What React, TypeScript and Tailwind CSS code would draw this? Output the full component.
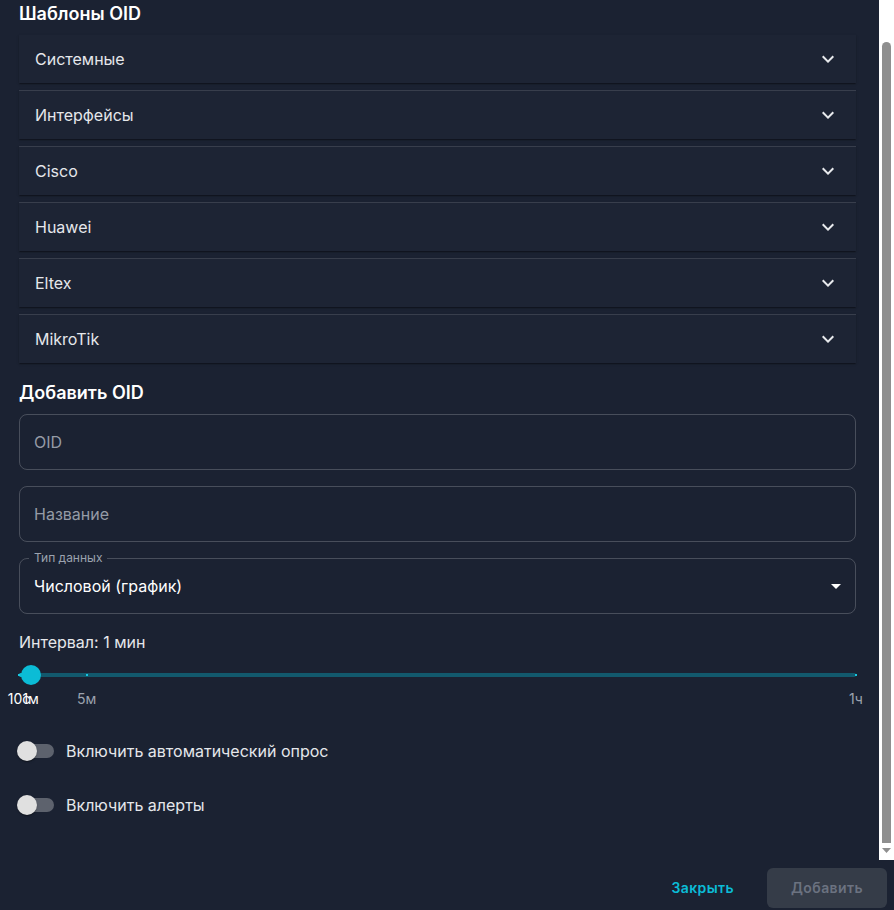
import { useLayoutEffect, useRef } from 'react'

const groups = ['Системные', 'Интерфейсы', 'Cisco', 'Huawei', 'Eltex', 'MikroTik']

// slider scale in seconds
const MIN = 10
const MAX = 3600
const VALUE = 60
const marks = [
  { value: 10, label: '10с' },
  { value: 60, label: '1м' },
  { value: 300, label: '5м' },
  { value: 3600, label: '1ч' },
]

const pct = (v: number) => ((v - MIN) / (MAX - MIN)) * 100

function ExpandMore() {
  return (
    <svg width="24" height="24" viewBox="0 0 24 24" className="fill-[#e8eaed] flex-shrink-0">
      <path d="M16.59 8.59 12 13.17 7.41 8.59 6 10l6 6 6-6z" />
    </svg>
  )
}

function Switch({ label }: { label: string }) {
  return (
    <label className="flex items-center h-[38px]">
      <span className="relative w-[58px] h-[38px] ml-[-11px] flex items-center justify-center">
        <span className="w-[34px] h-[14px] rounded-full bg-[#5d626d]" />
        <span className="absolute left-[9px] top-[9px] w-5 h-5 rounded-full bg-[#e0e0e0] shadow-[0_2px_1px_-1px_rgba(0,0,0,0.2),0_1px_1px_0_rgba(0,0,0,0.14),0_1px_3px_0_rgba(0,0,0,0.12)]" />
      </span>
      <span className="text-base text-[#e5e7eb]">{label}</span>
    </label>
  )
}

export default function App() {
  const scrollRef = useRef<HTMLDivElement>(null)

  useLayoutEffect(() => {
    if (scrollRef.current) scrollRef.current.scrollTop = 29
  }, [])

  return (
    <div className="w-[894px] h-[910px] bg-[#1b2232] font-['Inter',sans-serif] flex flex-col overflow-hidden">
      <div className="h-[860px] flex flex-shrink-0">
        <div ref={scrollRef} className="flex-1 overflow-hidden">
          <div className="pt-[29px] pb-[36px] pl-[19px] pr-[23px]">
            <h2 className="text-lg leading-7 font-semibold text-white">Шаблоны OID</h2>

            <div className="mt-[7px] flex flex-col gap-[7px]">
              {groups.map((g, i) => (
                <div
                  key={g}
                  className={`bg-[#1d2434] shadow-[0_2px_1px_-1px_rgba(0,0,0,0.2),0_1px_1px_0_rgba(0,0,0,0.14),0_1px_3px_0_rgba(0,0,0,0.12)] ${i > 0 ? 'border-t border-white/12' : ''}`}
                >
                  <button className="w-full h-12 flex items-center justify-between pl-4 pr-4 text-left">
                    <span className="text-base text-[#e5e7eb]">{g}</span>
                    <ExpandMore />
                  </button>
                </div>
              ))}
            </div>

            <h2 className="mt-4 text-lg leading-7 font-semibold text-white">Добавить OID</h2>

            <div className="mt-[7px] flex flex-col gap-4">
              <input
                placeholder="OID"
                className="h-14 w-full px-[14px] rounded-lg border border-white/20 bg-transparent text-base text-[#e5e7eb] placeholder-[#959ba6] outline-none"
              />
              <input
                placeholder="Название"
                className="h-14 w-full px-[14px] rounded-lg border border-white/20 bg-transparent text-base text-[#e5e7eb] placeholder-[#959ba6] outline-none"
              />
              <div className="relative h-14 w-full rounded-lg border border-white/20 flex items-center justify-between pl-[14px] pr-[7px]">
                <span className="absolute -top-[9px] left-[9px] px-[5px] bg-[#1b2232] text-xs leading-4 text-[#9ca3af]">Тип данных</span>
                <span className="text-base text-white">Числовой (график)</span>
                <svg width="24" height="24" viewBox="0 0 24 24" className="fill-white">
                  <path d="M7 10l5 5 5-5z" />
                </svg>
              </div>
            </div>

            <p className="mt-4 text-base leading-6 text-[#e5e7eb]">Интервал: 1 мин</p>

            {/* slider */}
            <div className="relative mt-[11px] h-[20px]">
              <div className="absolute left-0 right-0 top-[8px] h-1 rounded-full bg-[#12596d]" />
              <div
                className="absolute left-0 top-[8px] h-1 rounded-full bg-[#0bbcd6]"
                style={{ width: `${pct(VALUE)}%` }}
              />
              {marks.map(m => (
                <span
                  key={m.value}
                  className="absolute top-[9px] w-[2px] h-[2px] -translate-x-1/2 bg-[#17c6df]"
                  style={{ left: `${pct(m.value)}%` }}
                />
              ))}
              <span
                className="absolute top-0 w-5 h-5 -translate-x-1/2 rounded-full bg-[#0bbcd6]"
                style={{ left: `${pct(VALUE)}%` }}
              />
            </div>
            <div className="relative h-5 mt-[4px]">
              {marks.map(m => (
                <span
                  key={m.value}
                  className={`absolute top-0 -translate-x-1/2 text-sm leading-5 whitespace-nowrap ${m.value <= VALUE ? 'text-white' : 'text-[#9ca3af]'}`}
                  style={{ left: `${pct(m.value)}%` }}
                >
                  {m.label}
                </span>
              ))}
            </div>

            <div className="mt-[23px] flex flex-col gap-4">
              <Switch label="Включить автоматический опрос" />
              <Switch label="Включить алерты" />
            </div>
          </div>
        </div>

        {/* scrollbar */}
        <div className="w-[15px] bg-white flex flex-col items-center pt-[42px] pb-[6px]">
          <div className="w-[9px] flex-1 rounded-t-full rounded-b-[4px] bg-[#8f8f8f]" />
          <svg width="9" height="6" viewBox="0 0 9 6" className="mt-[5px] fill-[#8f8f8f]">
            <path d="M0 0h9L4.5 5z" />
          </svg>
        </div>
      </div>

      <div className="h-[50px] flex items-start pt-2 justify-end pr-[7px]">
        <button className="h-10 px-4 text-sm font-semibold tracking-[0.4px] text-[#0bbcd6]">Закрыть</button>
        <button disabled className="ml-[17px] h-10 w-[120px] rounded-md bg-[#353c48] text-sm font-semibold tracking-[0.4px] text-[#6b7280]">
          Добавить
        </button>
      </div>
    </div>
  )
}
